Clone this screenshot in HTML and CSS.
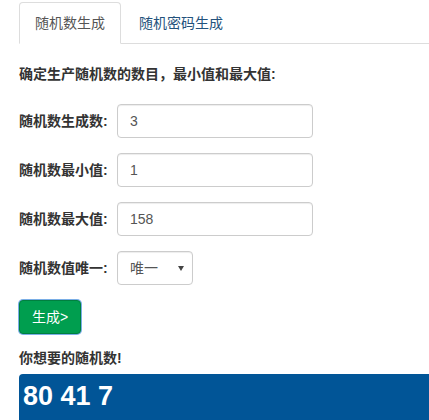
FILE: index.html
```html
<!DOCTYPE html>
<html lang="zh-CN">

<head>
  <meta charset="UTF-8">
  <meta name="viewport" content="width=device-width, initial-scale=1.0">
  <title>随机数生成</title>
  <link rel="stylesheet" href="styles.css">
</head>

<body>
  <div class="container">
    <ul class="nav-tabs">
      <li class="active"><a href="#">随机数生成</a></li>
      <li><a href="#">随机密码生成</a></li>
    </ul>

    <form id="randForm" class="rand-form">
      <p class="intro">确定生产随机数的数目，最小值和最大值:</p>

      <div class="form-row">
        <label for="count">随机数生成数:</label>
        <input type="text" id="count" class="form-control" value="3">
      </div>

      <div class="form-row">
        <label for="min">随机数最小值:</label>
        <input type="text" id="min" class="form-control" value="1">
      </div>

      <div class="form-row">
        <label for="max">随机数最大值:</label>
        <input type="text" id="max" class="form-control" value="158">
      </div>

      <div class="form-row">
        <label for="unique">随机数值唯一:</label>
        <span class="select-wrap">
          <select id="unique" class="form-select">
            <option>唯一</option>
            <option>不唯一</option>
          </select>
          <span class="caret"></span>
        </span>
      </div>

      <button type="submit" class="btn btn-green">生成&gt;</button>
    </form>

    <p class="result-title">你想要的随机数!</p>
    <div class="result" id="result">80 41 7</div>
  </div>
</body>

</html>
```

FILE: styles.css
```css
body {
  font-family: 'Liberation Sans', 'Noto Sans CJK SC', sans-serif;
  font-size: 14px;
  line-height: 20px;
  margin: 0;
  padding: 0;
  color: #333;
  background: #fff;
}

.container {
  padding-left: 19px;
}

/* tabs */
.nav-tabs {
  list-style: none;
  margin: 2px 0 0;
  padding: 0;
  display: flex;
  border-bottom: 1px solid #ddd;
}

.nav-tabs li {
  margin-bottom: -1px;
  margin-right: 2px;
}

.nav-tabs a {
  display: block;
  padding: 10px 15px;
  line-height: 20px;
  border: 1px solid transparent;
  border-radius: 4px 4px 0 0;
  color: #23527c;
  text-decoration: none;
}

.nav-tabs .active a {
  color: #555;
  background: #fff;
  border-color: #ddd;
  border-bottom-color: transparent;
}

/* form */
.intro {
  font-weight: bold;
  margin: 20px 0 20px;
}

.form-row {
  display: flex;
  align-items: center;
  margin-bottom: 15px;
}

.form-row label {
  width: 98px;
  font-weight: bold;
}

.form-control,
.form-select {
  font-family: inherit;
  font-size: 14px;
  color: #555;
  height: 34px;
  box-sizing: border-box;
  padding: 6px 12px;
  border: 1px solid #ccc;
  border-radius: 4px;
  background: #fff;
  box-shadow: inset 0 1px 1px rgba(0, 0, 0, 0.075);
}

.form-control {
  width: 196px;
}

.select-wrap {
  position: relative;
  display: inline-block;
}

.form-select {
  width: 76px;
  appearance: none;
  -webkit-appearance: none;
}

.caret {
  position: absolute;
  right: 9px;
  top: 15px;
  border-left: 3px solid transparent;
  border-right: 3px solid transparent;
  border-top: 5px solid #444;
  pointer-events: none;
}

.btn {
  display: inline-block;
  font-family: inherit;
  font-size: 14px;
  line-height: 20px;
  padding: 6px 12px;
  border-radius: 4px;
  cursor: pointer;
}

.btn-green {
  margin-top: 0;
  background: #009e4f;
  border: 1px solid #00803f;
  color: #fff;
  box-shadow: 0 0 0 1px #7aaee6;
}

/* result */
.result-title {
  font-weight: bold;
  margin: 14px 0 6px;
}

.result {
  background: #015597;
  color: #fff;
  font-size: 27px;
  font-weight: bold;
  line-height: 44px;
  height: 60px;
  padding: 0 4px;
  border-radius: 4px 0 0 4px;
}
```
